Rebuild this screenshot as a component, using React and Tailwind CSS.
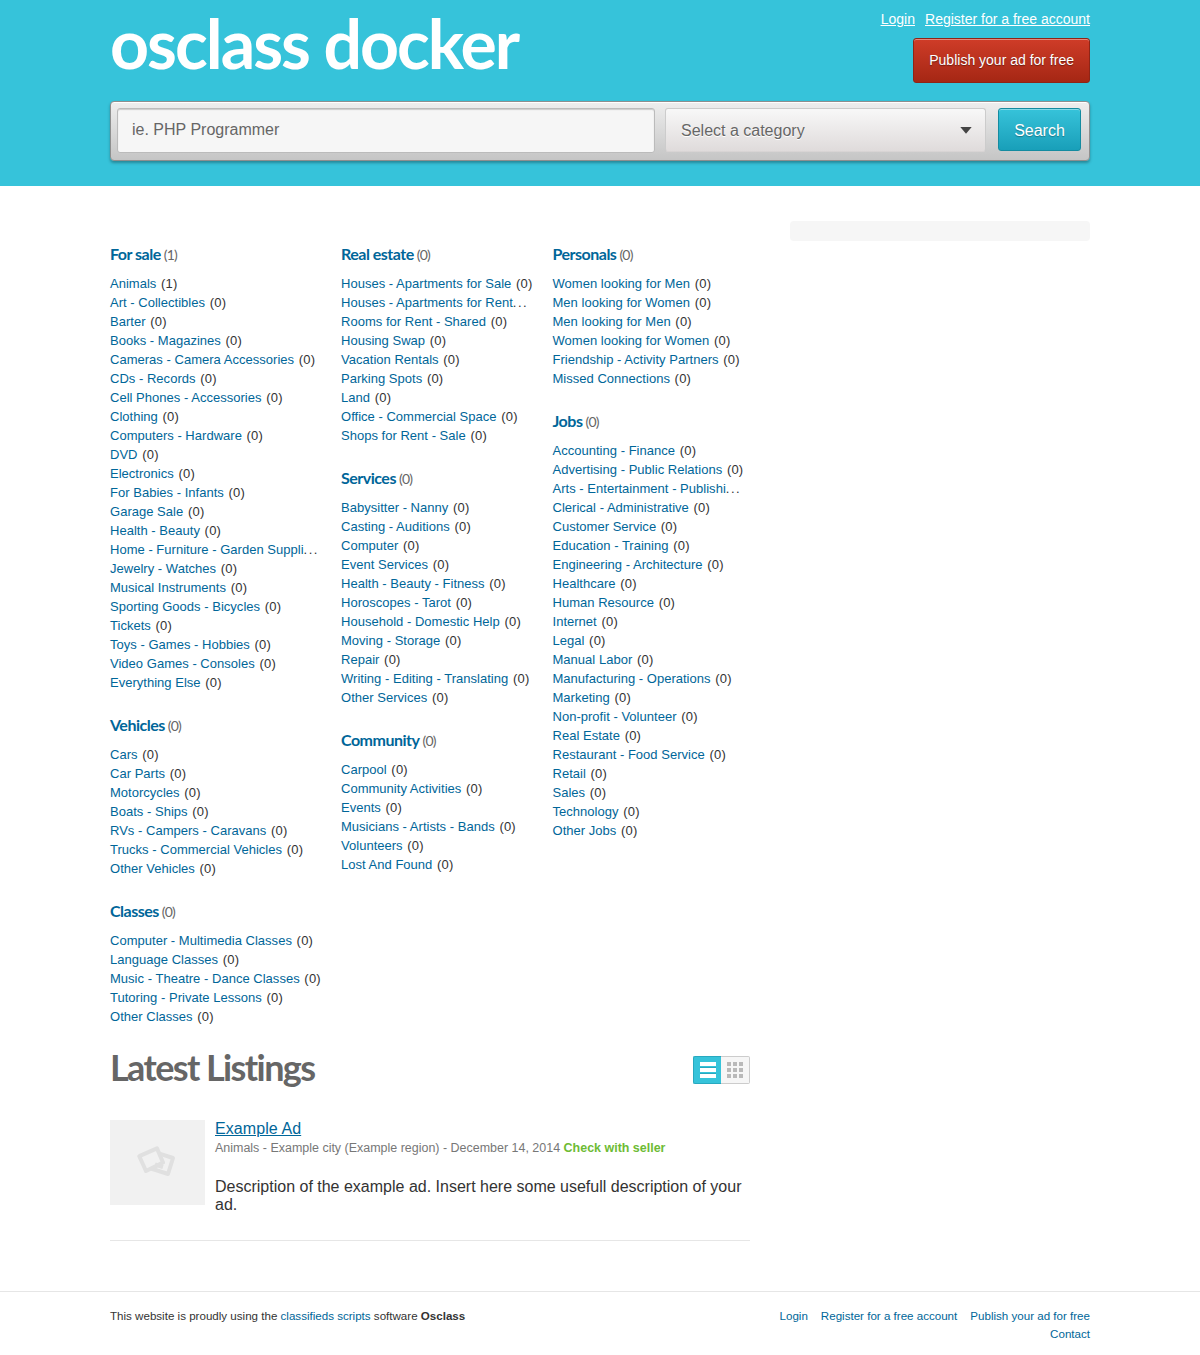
const columns = [
  {
    width: 'w-[211.5px]',
    groups: [
      ['For sale', 1, ['Animals', 'Art - Collectibles', 'Barter', 'Books - Magazines', 'Cameras - Camera Accessories', 'CDs - Records', 'Cell Phones - Accessories', 'Clothing', 'Computers - Hardware', 'DVD', 'Electronics', 'For Babies - Infants', 'Garage Sale', 'Health - Beauty', 'Home - Furniture - Garden Suppli...', 'Jewelry - Watches', 'Musical Instruments', 'Sporting Goods - Bicycles', 'Tickets', 'Toys - Games - Hobbies', 'Video Games - Consoles', 'Everything Else']],
      ['Vehicles', 0, ['Cars', 'Car Parts', 'Motorcycles', 'Boats - Ships', 'RVs - Campers - Caravans', 'Trucks - Commercial Vehicles', 'Other Vehicles']],
      ['Classes', 0, ['Computer - Multimedia Classes', 'Language Classes', 'Music - Theatre - Dance Classes', 'Tutoring - Private Lessons', 'Other Classes']],
    ],
  },
  {
    width: 'w-[192px]',
    groups: [
      ['Real estate', 0, ['Houses - Apartments for Sale', 'Houses - Apartments for Rent...', 'Rooms for Rent - Shared', 'Housing Swap', 'Vacation Rentals', 'Parking Spots', 'Land', 'Office - Commercial Space', 'Shops for Rent - Sale']],
      ['Services', 0, ['Babysitter - Nanny', 'Casting - Auditions', 'Computer', 'Event Services', 'Health - Beauty - Fitness', 'Horoscopes - Tarot', 'Household - Domestic Help', 'Moving - Storage', 'Repair', 'Writing - Editing - Translating', 'Other Services']],
      ['Community', 0, ['Carpool', 'Community Activities', 'Events', 'Musicians - Artists - Bands', 'Volunteers', 'Lost And Found']],
    ],
  },
  {
    width: 'w-[194px]',
    groups: [
      ['Personals', 0, ['Women looking for Men', 'Men looking for Women', 'Men looking for Men', 'Women looking for Women', 'Friendship - Activity Partners', 'Missed Connections']],
      ['Jobs', 0, ['Accounting - Finance', 'Advertising - Public Relations', 'Arts - Entertainment - Publishi...', 'Clerical - Administrative', 'Customer Service', 'Education - Training', 'Engineering - Architecture', 'Healthcare', 'Human Resource', 'Internet', 'Legal', 'Manual Labor', 'Manufacturing - Operations', 'Marketing', 'Non-profit - Volunteer', 'Real Estate', 'Restaurant - Food Service', 'Retail', 'Sales', 'Technology', 'Other Jobs']],
    ],
  },
];

function Item({ label }) {
  const shortened = label.endsWith('...');
  return (
    <li className="text-[13px] leading-[19px] whitespace-nowrap">
      <a href="#" className="tracking-[0.02px] text-[#006699]">{shortened ? label.slice(0, -3) : label}</a>
      {shortened
        ? <span className="tracking-[1.5px]">...</span>
        : <span className="ml-[4.7px] tracking-[0.2px]">({label === 'Animals' ? 1 : 0})</span>}
    </li>
  );
}

function Group({ name, count, items }) {
  return (
    <section className="mb-6">
      <h2 className="-mt-px mb-[11px] h-[19px] whitespace-nowrap font-['Lato',sans-serif] text-base leading-[19px] font-bold tracking-[-0.5px] text-[#006699]">
        {name}<span className="ml-[3px] text-sm font-normal tracking-[-0.8px] text-[#666]">({count})</span>
      </h2>
      <ul>
        {items.map((item) => <Item key={item} label={item} />)}
      </ul>
    </section>
  );
}

function Header() {
  return (
    <header className="h-[186px] bg-[#36c3da]">
      <div className="mx-auto w-[980px]">
        <div className="flex h-[101px] justify-between">
          <a href="#" className="mt-[3px] font-['Lato',sans-serif] text-[68px] leading-[80px] font-bold tracking-[-2px] whitespace-nowrap text-white">osclass docker</a>
          <div className="flex flex-col items-end pt-2.5">
            <nav className="flex gap-2.5 text-sm leading-[18px] text-white underline">
              <a href="#">Login</a>
              <a href="#">Register for a free account</a>
            </nav>
            <a href="#" className="mt-2.5 flex h-[45px] items-center rounded-[3px] border border-[#8f2416] bg-linear-to-b from-[#cf3c28] to-[#a52714] px-[15px] pb-0.5 text-sm text-white shadow-[inset_0_1px_0_rgba(255,255,255,0.4)] [text-shadow:0_1px_1px_rgba(0,0,0,0.4)]">Publish your ad for free</a>
          </div>
        </div>
        <form className="flex h-[60px] rounded border border-[#8e8e8e] bg-linear-to-b from-[#eeeeee] to-[#c5c5c5] pt-1.5 pl-1.5 shadow-[0_2px_3px_rgba(0,0,0,0.3),inset_0_1px_0_#fff]">
          <input aria-label="Search" placeholder="ie. PHP Programmer" className="h-[45px] w-[538px] rounded-[3px] border border-[#bbb] bg-[#f6f6f6] px-3.5 pb-0.5 text-base text-[#666] shadow-[inset_0_1px_1px_#ccc] placeholder:text-[#666]" />
          <div className="ml-2.5 flex h-11 w-[321px] items-center justify-between rounded-[3px] border border-[#ccc] border-b-[#d8d4d4] bg-linear-to-b from-[#f8f8f8] to-[#dfdbdb] pt-px pr-[13px] pl-[15px] text-base text-[#666] [text-shadow:0_1px_0_#fff]">
            Select a category
            <svg width="12" height="7" viewBox="0 0 12 7"><path d="M0.3 0h11.4L6 6.8z" fill="#444" /></svg>
          </div>
          <button type="button" className="ml-3 h-[43px] w-[83px] rounded-[3px] border border-[#148ba0] bg-linear-to-b from-[#36c3da] to-[#189fb9] pt-0.5 text-base text-white shadow-[inset_0_1px_0_rgba(255,255,255,0.4)] [text-shadow:0_1px_1px_rgba(0,0,0,0.3)]">Search</button>
        </form>
      </div>
    </header>
  );
}

function ViewToggle() {
  return (
    <div className="mt-[5px] flex h-7 w-[57px]">
      <a href="#" aria-label="List view" className="flex w-7 items-center justify-center rounded-l-xs border border-r-0 border-[#27a9c0] bg-[#36c3da]">
        <svg width="16" height="16" viewBox="0 0 16 16" shapeRendering="crispEdges">
          <path d="M0 5h16v1H0zM0 11h16v1H0z" fill="#27a9c0" />
          <path d="M0 0h16v4H0zM0 6h16v4H0zM0 12h16v4H0z" fill="#fff" />
        </svg>
      </a>
      <a href="#" aria-label="Gallery view" className="flex w-[29px] items-center justify-center rounded-r-xs border border-l-0 border-[#ccc] bg-[#f6f6f6]">
        <svg width="16" height="16" viewBox="0 0 16 16" fill="#b9b9b9" shapeRendering="crispEdges">
          <path d="M0 0h4v4H0zM6 0h4v4H6zM12 0h4v4h-4zM0 6h4v4H0zM6 6h4v4H6zM12 6h4v4h-4zM0 12h4v4H0zM6 12h4v4H6zM12 12h4v4h-4z" />
        </svg>
      </a>
    </div>
  );
}

function Latest() {
  return (
    <section>
      <div className="flex h-[69px] w-[640px] justify-between">
        <h1 className="-mt-px h-11 font-['Lato',sans-serif] text-4xl leading-[34px] font-bold tracking-[-1.6px] text-[#666]">Latest Listings</h1>
        <ViewToggle />
      </div>
      <article className="flex h-[121px] w-[640px] border-b border-[#e6e6e6]">
        <div className="mr-2.5 h-[85px] w-[95px] bg-[#f1f1f1] pt-[26px] pl-[27px]">
          <svg width="39" height="31" viewBox="0 0 39 31" fill="none" stroke="#e0e0e0">
            <path d="M20 6.8 36 12 31 28 14 22.5" strokeWidth="4" strokeLinejoin="round" />
            <path d="M2.3 10.2 20 2.4 26 16.5 9 25z" fill="#f1f1f1" strokeWidth="4" strokeLinejoin="round" />
            <path d="M18 18.5 26 21" strokeWidth="4" />
          </svg>
        </div>
        <div className="w-[535px]">
          <a href="#" className="block text-base leading-[18px] tracking-[0.08px] text-[#006699] underline">Example Ad</a>
          <p className="text-[12.48px] leading-5 text-[#777]">Animals - Example city (Example region) - December 14, 2014 <b className="text-[#6dbb34]">Check with seller</b></p>
          <p className="mt-5 text-base leading-[18px] text-[#333]">Description of the example ad. Insert here some usefull description of your ad.</p>
        </div>
      </article>
    </section>
  );
}

function Footer() {
  return (
    <footer className="mt-[50px] h-16 border-t border-[#e6e6e6]">
      <div className="mx-auto flex w-[980px] justify-between pt-[15px] text-[11.59px] leading-[18px]">
        <p>This website is proudly using the <a href="#" className="text-[#006699]">classifieds scripts</a> software <b>Osclass</b></p>
        <nav className="flex w-[330px] flex-wrap justify-end gap-x-[13px] text-[#006699]">
          <a href="#">Login</a>
          <a href="#">Register for a free account</a>
          <a href="#">Publish your ad for free</a>
          <a href="#">Contact</a>
        </nav>
      </div>
    </footer>
  );
}

export default function App() {
  return (
    <div className="h-[1355px] overflow-hidden bg-white font-['Liberation_Sans',Arial,sans-serif] text-[#333]">
      <Header />
      <main className="mx-auto w-[980px]">
        <div className="flex h-[865px] justify-between pt-[35px]">
          <div className="flex gap-[19.5px] pt-6">
            {columns.map((column) => (
              <div key={column.width} className={column.width}>
                {column.groups.map(([name, count, items]) => <Group key={name} name={name} count={count} items={items} />)}
              </div>
            ))}
          </div>
          <aside className="h-5 w-[300px] rounded bg-[#f6f6f6]" />
        </div>
        <Latest />
      </main>
      <Footer />
    </div>
  );
}
